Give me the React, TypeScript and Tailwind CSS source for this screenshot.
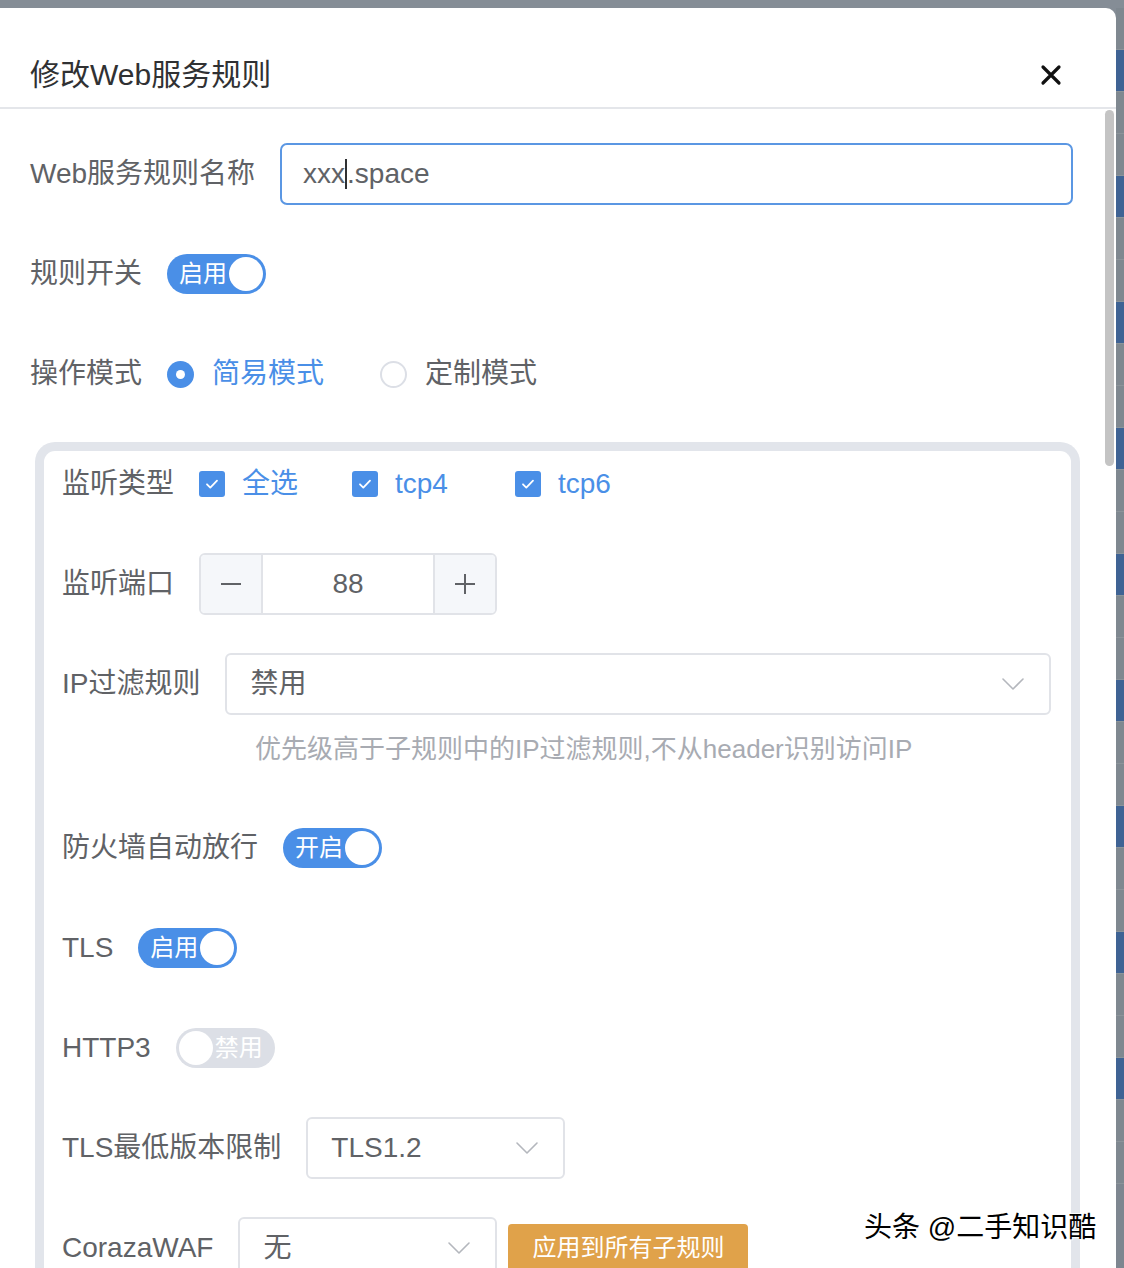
import React from "react";

const font = { fontFamily: '"Liberation Sans", "Noto Sans CJK SC", sans-serif' };

function Switch({ on, text }: { on: boolean; text: string }) {
  if (on) {
    return (
      <div className="flex h-[40px] w-[99px] shrink-0 items-center justify-between rounded-full bg-[#4a8fe7] pl-[12px] pr-[3px]">
        <span className="text-[24px] leading-none text-white">{text}</span>
        <span className="h-[34px] w-[34px] rounded-full bg-white" />
      </div>
    );
  }
  return (
    <div className="flex h-[40px] w-[99px] shrink-0 items-center justify-between rounded-full bg-[#dcdfe6] pl-[3px] pr-[12px]">
      <span className="h-[34px] w-[34px] rounded-full bg-white" />
      <span className="text-[24px] leading-none text-white">{text}</span>
    </div>
  );
}

function Check({ label, w }: { label: string; w: string }) {
  return (
    <div className={`flex items-center gap-[17px] ${w}`}>
      <span className="flex h-[26px] w-[26px] items-center justify-center rounded-[3px] bg-[#4a8fe7]">
        <svg width="18" height="18" viewBox="0 0 18 18" fill="none">
          <path d="M4 9.3l3.3 3.3L14 5.6" stroke="white" strokeWidth="1.8" strokeLinecap="round" strokeLinejoin="round" />
        </svg>
      </span>
      <span className="text-[28px] text-[#4a8fe7]">{label}</span>
    </div>
  );
}

function Chevron() {
  return (
    <svg width="24" height="14" viewBox="0 0 24 14" fill="none">
      <path d="M2 2l10 10 10-10" stroke="#b4b7bd" strokeWidth="1.6" strokeLinecap="round" strokeLinejoin="round" />
    </svg>
  );
}

function Select({ value, w }: { value: string; w: string }) {
  return (
    <div className={`flex h-[62px] items-center justify-between rounded-[6px] border-2 border-[#e1e3e8] bg-white pl-[23px] pr-[24px] ${w}`}>
      <span className="text-[28px] text-[#606266]">{value}</span>
      <Chevron />
    </div>
  );
}

function Row({ label, children, className = "" }: { label: string; children: React.ReactNode; className?: string }) {
  return (
    <div className={`flex h-[62px] items-center gap-[25px] ${className}`}>
      <span className="shrink-0 whitespace-nowrap text-[28px] text-[#606266]">{label}</span>
      {children}
    </div>
  );
}

export default function App() {
  return (
    <div className="relative flex h-[1268px] w-[1124px] overflow-hidden bg-[#858d96]" style={font}>
      <div className="mt-[8px] flex w-[1116px] shrink-0 flex-col rounded-tr-[10px] bg-white">
        <div className="flex items-center justify-between border-b-2 border-[#e4e6ea] pb-[12px] pl-[30px] pr-[54px] pt-[47px]">
          <span className="text-[30px] leading-[40px] text-[#303133]">修改Web服务规则</span>
          <svg width="22" height="22" viewBox="0 0 22 22">
            <path d="M3 3l16 16M19 3L3 19" stroke="#111" strokeWidth="3.2" strokeLinecap="round" />
          </svg>
        </div>

        <div className="relative flex-1 pl-[30px] pr-[43px] pt-[34px]">
          <div className="absolute right-[2px] top-[1px] h-[356px] w-[9px] rounded-full bg-[#c4c4c4]" />

          <Row label="Web服务规则名称" className="mb-[38px]">
            <div className="flex h-[62px] flex-1 items-center rounded-[7px] border-2 border-[#5b97e3] pl-[21px]">
              <span className="text-[28px] text-[#606266]">xxx</span>
              <span className="h-[30px] w-[2px] bg-[#303133]" />
              <span className="text-[28px] text-[#606266]">.space</span>
            </div>
          </Row>

          <Row label="规则开关" className="mb-[38px]">
            <Switch on text="启用" />
          </Row>

          <Row label="操作模式" className="mb-[37px]">
            <div className="flex items-center gap-[18px]">
              <span className="flex h-[27px] w-[27px] items-center justify-center rounded-full bg-[#4a8fe7]">
                <span className="h-[9px] w-[9px] rounded-full bg-white" />
              </span>
              <span className="text-[28px] text-[#4a8fe7]">简易模式</span>
            </div>
            <div className="ml-[31px] flex items-center gap-[18px]">
              <span className="h-[27px] w-[27px] rounded-full border-2 border-[#dcdfe6] bg-white" />
              <span className="text-[28px] text-[#606266]">定制模式</span>
            </div>
          </Row>

          <div className="ml-[5px] mr-[-7px] rounded-[20px] border-[9px] border-b-0 border-[#e2e5eb] pb-[40px] pl-[18px] pr-[20px] pt-[2px]">
            <Row label="监听类型" className="mb-[38px]">
              <div className="flex items-center">
                <Check label="全选" w="w-[153px]" />
                <Check label="tcp4" w="w-[163px]" />
                <Check label="tcp6" w="w-[120px]" />
              </div>
            </Row>

            <Row label="监听端口" className="mb-[38px]">
              <div className="flex h-[62px] w-[298px] overflow-hidden rounded-[6px] border-2 border-[#e1e3e8]">
                <div className="flex w-[62px] items-center justify-center border-r-2 border-[#e1e3e8] bg-[#f5f7fa]">
                  <svg width="24" height="24" viewBox="0 0 24 24"><path d="M2 12h20" stroke="#606266" strokeWidth="2" /></svg>
                </div>
                <div className="flex flex-1 items-center justify-center text-[28px] text-[#606266]">88</div>
                <div className="flex w-[62px] items-center justify-center border-l-2 border-[#e1e3e8] bg-[#f5f7fa]">
                  <svg width="24" height="24" viewBox="0 0 24 24"><path d="M2 12h20M12 2v20" stroke="#606266" strokeWidth="2" /></svg>
                </div>
              </div>
            </Row>

            <Row label="IP过滤规则">
              <Select value="禁用" w="flex-1" />
            </Row>
            <div className="mb-[38px] h-[64px] pl-[193px] pt-[16px] text-[26px] leading-[36px] text-[#a8abb2]">
              优先级高于子规则中的IP过滤规则,不从header识别访问IP
            </div>

            <Row label="防火墙自动放行" className="mb-[38px]">
              <Switch on text="开启" />
            </Row>

            <Row label="TLS" className="mb-[38px]">
              <Switch on text="启用" />
            </Row>

            <Row label="HTTP3" className="mb-[38px]">
              <Switch on={false} text="禁用" />
            </Row>

            <Row label="TLS最低版本限制" className="mb-[38px]">
              <Select value="TLS1.2" w="w-[259px]" />
            </Row>

            <Row label="CorazaWAF">
              <Select value="无" w="w-[259px]" />
              <div className="-ml-[14px] flex h-[48px] w-[240px] items-center justify-center rounded-[4px] bg-[#e0a24a] text-[24px] text-white">
                应用到所有子规则
              </div>
            </Row>
          </div>
        </div>
      </div>

      <div className="mt-[8px] flex flex-1 flex-col bg-[#7e8690]">
        {Array.from({ length: 28 }).map((_, i) => (
          <div
            key={i}
            className={`h-[42px] border-b border-[#8c949a] ${i % 3 === 1 ? "bg-[#3f6394]" : "bg-[#7f8890]"}`}
          />
        ))}
      </div>

      <div
        className="absolute left-[864px] top-[1209px] text-[28px] leading-[38px] text-black"
        style={{ textShadow: "1px 1px 1px #fff, -1px -1px 1px #fff" }}
      >
        头条 @二手知识酷
      </div>
    </div>
  );
}
